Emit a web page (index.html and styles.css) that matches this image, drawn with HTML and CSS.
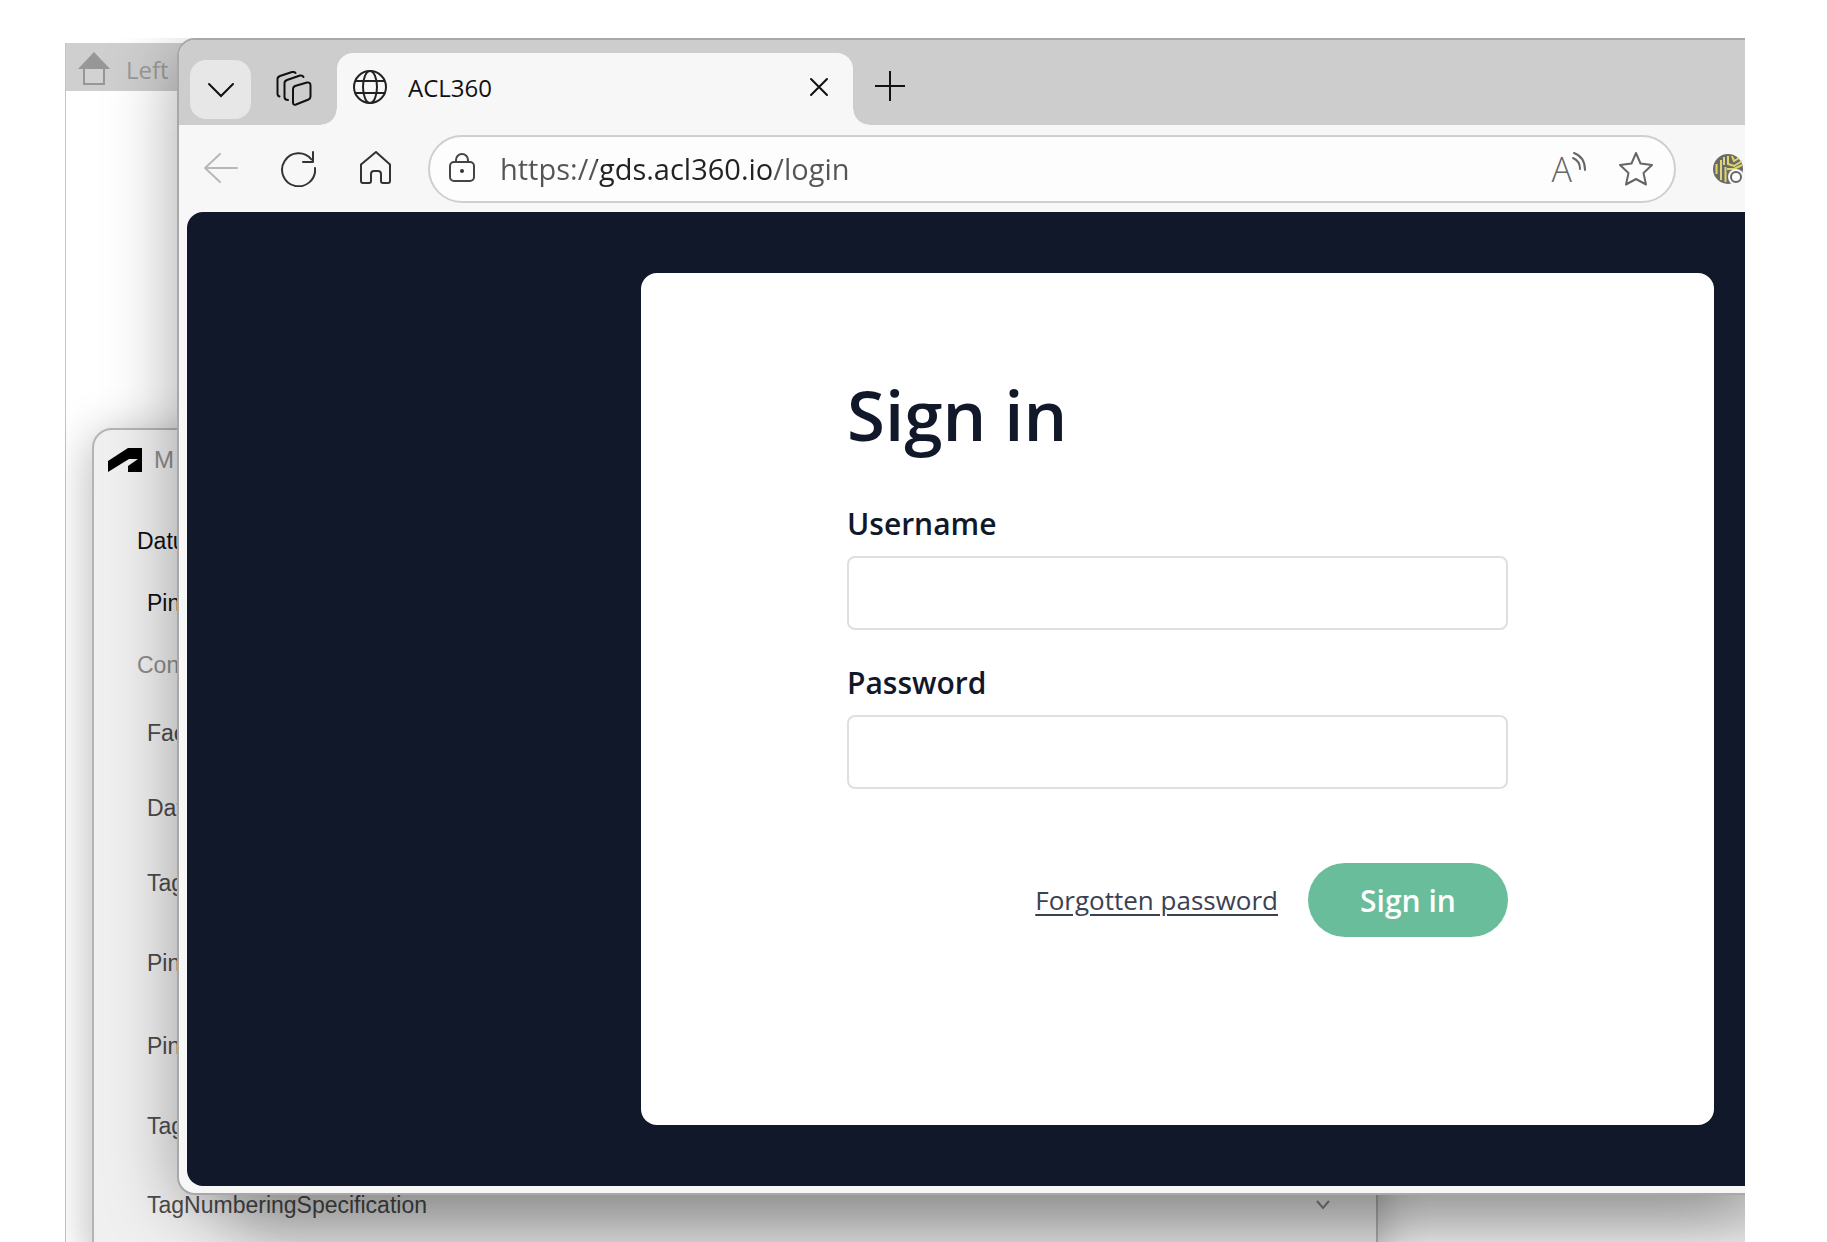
FILE: index.html
```html
<!DOCTYPE html>
<html lang="en">
  <head>
    <meta charset="UTF-8" />
    <meta name="viewport" content="width=device-width, initial-scale=1.0" />
    <title>ACL360</title>
    <link rel="stylesheet" href="styles.css">
  </head>
  <body>
    <div class="desktop">
      <!-- drawing window -->
      <div class="viewer">
        <div class="viewer-head">
          <svg width="32" height="36" viewBox="0 0 32 36">
            <path d="M0 18 16 1l16 17z" fill="#979797" />
            <path d="M6 18v15h20V18" fill="#d2d2d2" stroke="#979797" stroke-width="2" />
          </svg>
          <span>Left</span>
        </div>
      </div>

      <!-- properties window -->
      <div class="palette">
        <div class="palette-head">
          <svg width="34" height="24" viewBox="0 0 34 24">
            <path d="M0 13 20 0h14v24H20v-6l10-7h-9L0 24z" fill="#000" />
          </svg>
          <span>M</span>
        </div>
        <div class="props">
          <span class="group">Datu</span>
          <span class="strong">Pin</span>
          <span class="group muted">Con</span>
          <span>Fac</span>
          <span>Dat</span>
          <span>Tag</span>
          <span>Pin</span>
          <span>Pin</span>
          <span>Tag</span>
          <div class="prop-field">
            <label for="spec">TagNumberingSpecification</label>
            <select id="spec"></select>
            <svg width="16" height="10" viewBox="0 0 16 10" fill="none" stroke="#8a8a8a" stroke-width="2">
              <path d="m2 1 6 7 6-7" />
            </svg>
          </div>
        </div>
      </div>

      <!-- browser -->
      <div class="browser">
        <div class="tabs">
          <button class="tab-menu" aria-label="Tab actions">
            <svg width="28" height="18" viewBox="0 0 28 18" fill="none" stroke="#111" stroke-width="2" stroke-linecap="round">
              <path d="m2 3 12 12L26 3" />
            </svg>
          </button>
          <button class="icon-button workspaces" aria-label="Workspaces">
            <svg width="36" height="36" viewBox="0 0 36 36" fill="none" stroke="#111" stroke-width="2" stroke-linecap="round" stroke-linejoin="round">
              <path d="M19 15 31 11.500q3.500-.500 3.500 3v11q0 2-2 3L20 33.500q-3 1-3-2V18q0-2 2-3z" />
              <path d="M12 29q-3.500 0-3.500-3V12q0-2 2.500-3L24 4.500q2.500-.500 3.500 1.500" />
              <path d="M3.500 25.500Q1.500 25 1.500 22.500V8q0-2 2.500-3L16 1q2.500-.500 3.500 1" />
            </svg>
          </button>
          <div class="tab">
            <svg width="36" height="36" viewBox="0 0 36 36" fill="none" stroke="#222" stroke-width="2">
              <circle cx="18" cy="18" r="16" />
              <ellipse cx="18" cy="18" rx="7" ry="16" />
              <path d="M3.500 12h29M3.500 24h29" />
            </svg>
            <span class="tab-title">ACL360</span>
            <button class="icon-button" aria-label="Close tab">
              <svg width="20" height="20" viewBox="0 0 20 20" stroke="#111" stroke-width="2" stroke-linecap="round">
                <path d="m2 2 16 16M18 2 2 18" />
              </svg>
            </button>
          </div>
          <button class="icon-button new-tab" aria-label="New tab">
            <svg width="32" height="32" viewBox="0 0 32 32" stroke="#111" stroke-width="2">
              <path d="M16 1v30M1 16h30" />
            </svg>
          </button>
        </div>

        <div class="toolbar">
          <button class="icon-button" aria-label="Back">
            <svg width="36" height="36" viewBox="0 0 36 36" fill="none" stroke="#b8b8b8" stroke-width="2" stroke-linecap="round" stroke-linejoin="round">
              <path d="M34 17H2M17 3 2 17l15 14" />
            </svg>
          </button>
          <button class="icon-button" aria-label="Refresh">
            <svg width="36" height="36" viewBox="0 0 36 36" fill="none" stroke="#333" stroke-width="2" stroke-linecap="round" stroke-linejoin="round">
              <path d="M35 17A16.500 16.500 0 1 1 31.500 8.500M33 1v10H23" />
            </svg>
          </button>
          <button class="icon-button" aria-label="Home">
            <svg width="36" height="36" viewBox="0 0 36 36" fill="none" stroke="#333" stroke-width="2" stroke-linejoin="round">
              <path d="M4 13.500 19 1l14 12.500V30q0 2-2 2h-5q-2 0-2-2v-7q0-3-3-3h-4q-3 0-3 3v7q0 2-2 2H6q-2 0-2-2z" />
            </svg>
          </button>
          <div class="address">
            <svg width="28" height="32" viewBox="0 0 28 32" fill="none" stroke="#444" stroke-width="2">
              <rect x="2" y="9" width="24" height="19" rx="4" />
              <path d="M8 9V7a6 6 0 0 1 12 0v2" />
              <circle cx="14" cy="18" r="2" fill="#333" stroke="none" />
            </svg>
            <input class="url" type="text" aria-label="Address" value="https://gds.acl360.io/login">
            <button class="icon-button read" aria-label="Read aloud">
              <span>A</span>
              <svg width="14" height="20" viewBox="0 0 14 20" fill="none" stroke="#666" stroke-width="2" stroke-linecap="round">
                <path d="M1 7q7 3 7 11M2 2q11 4 11 17" />
              </svg>
            </button>
            <button class="icon-button" aria-label="Favourite">
              <svg width="36" height="36" viewBox="0 0 36 36" fill="none" stroke="#666" stroke-width="2" stroke-linejoin="round">
                <path d="m18 2 4.500 10.500L34 14l-8.500 8L28 33.500 18 28 8 33.500 10.500 22 2 14l11.500-1.500z" />
              </svg>
            </button>
          </div>
          <button class="icon-button" aria-label="Extension">
            <svg width="32" height="32" viewBox="0 0 32 32" fill="none">
              <circle cx="15" cy="16" r="15" fill="#6a6a68" />
              <path d="M3.500 11v10M8 7v20M12.500 14v15M18 29V19h6" stroke="#e0d56c" stroke-width="2" />
              <path d="M11 4v8M15 3v8l6 2 8-5M19 3l2 5 5-3M14 16h7l8-4" stroke="#e0d56c" stroke-width="2" />
              <circle cx="23" cy="24" r="8" fill="#f7f7f7" />
              <circle cx="23" cy="24" r="5" fill="#fff" stroke="#666" stroke-width="2" />
            </svg>
          </button>
        </div>

        <div class="page">
          <form class="card">
            <h1 class="title">Sign in</h1>
            <label for="username">Username</label>
            <input class="field" id="username" type="text">
            <label for="password">Password</label>
            <input class="field" id="password" type="password">
            <div class="actions">
              <a class="forgot" href="#">Forgotten password</a>
              <button class="submit" type="button">Sign in</button>
            </div>
          </form>
        </div>
      </div>
    </div>
  </body>
</html>
```
FILE: styles.css
```css
* {
  box-sizing: border-box;
}
body {
  margin: 0;
  background: #fff;
  font-family: "Open Sans", sans-serif;
}
svg {
  display: block;
  flex-shrink: 0;
}
.desktop {
  position: relative;
  min-height: 100vh;
  margin: 0 82px 0 65px;
  padding: 38px 0 48px 112px;
  overflow: hidden;
}

/* windows behind the browser */
.viewer {
  position: absolute;
  top: 43px;
  right: 0;
  bottom: 0;
  left: 0;
  background: #fff;
  border-left: 1px solid #c4c4c4;
}
.viewer-head {
  display: flex;
  align-items: center;
  gap: 16px;
  height: 48px;
  padding: 4px 12px 0;
  background: #cfcfcf;
  color: #9a9a9a;
  font-size: 24px;
}
.palette {
  position: absolute;
  top: 428px;
  bottom: -20px;
  left: 27px;
  width: 1286px;
  background: #f0f0f0;
  border: 2px solid #b4b4b4;
  border-radius: 20px;
  box-shadow: 0 8px 48px rgba(0, 0, 0, .3);
  font-family: "Liberation Sans", sans-serif;
}
.palette-head {
  display: flex;
  align-items: center;
  gap: 12px;
  height: 60px;
  padding: 0 14px;
  color: #8c8c8c;
  font-size: 24px;
}
.props {
  display: grid;
  grid-template-rows: 62px 62px 62px 75px 75px 75px 84px 82px 78px 80px;
  align-items: center;
  margin-top: 20px;
  padding-left: 53px;
  color: #4c4c4c;
  font-size: 23px;
}
.group {
  margin-left: -10px;
  color: #111;
}
.strong {
  color: #111;
}
.muted {
  color: #8c8c8c;
}
.prop-field {
  display: flex;
  align-items: center;
  padding-right: 45px;
}
.prop-field select {
  flex: 1;
  height: 40px;
  appearance: none;
  border: none;
  background: none;
}

/* browser */
.browser {
  position: relative;
  background: #f7f7f7;
  border: 2px solid #a8a8a8;
  border-right: none;
  border-radius: 18px 0 0 18px;
  box-shadow: 0 12px 70px rgba(0, 0, 0, .35), 60px 50px 60px rgba(0, 0, 0, .2);
  /* the shadow falls to the left and below only */
  clip-path: inset(0 0 -120px -120px);
}
button {
  font-family: inherit;
  cursor: pointer;
}
.icon-button {
  padding: 0;
  border: none;
  background: none;
}
.tabs {
  display: flex;
  align-items: flex-end;
  height: 85px;
  padding-left: 11px;
  background: #cdcdcd;
  border-radius: 16px 0 0 0;
}
.tab-menu {
  display: flex;
  align-items: center;
  justify-content: center;
  width: 61px;
  height: 59px;
  margin-bottom: 6px;
  padding: 0;
  border: none;
  border-radius: 16px;
  background: #e7e7e7;
}
.workspaces {
  margin: 0 25px 18px;
}
.tab {
  position: relative;
  display: flex;
  align-items: center;
  width: 516px;
  height: 72px;
  padding: 0 24px 4px 15px;
  background: #f7f7f7;
  border-radius: 16px 16px 0 0;
}
/* curved feet of the active tab */
.tab::before,
.tab::after {
  content: "";
  position: absolute;
  bottom: 0;
  width: 16px;
  height: 16px;
}
.tab::before {
  right: 100%;
  background: radial-gradient(circle at 0 0, #cdcdcd 15px, #f7f7f7 16px);
}
.tab::after {
  left: 100%;
  background: radial-gradient(circle at 100% 0, #cdcdcd 15px, #f7f7f7 16px);
}
.tab-title {
  flex: 1;
  margin-left: 20px;
  color: #111;
  font-size: 24px;
}
.new-tab {
  margin: 0 0 23px 21px;
}
.toolbar {
  display: flex;
  align-items: center;
  height: 87px;
  padding: 0 0 0 24px;
  gap: 41px;
}
.address {
  display: flex;
  flex: 1;
  align-items: center;
  gap: 24px;
  height: 68px;
  margin: 0 -4px 0 -6px;
  padding: 0 20px 0 18px;
  background: #fdfdfd;
  border: 2px solid #cfcfcf;
  border-radius: 34px;
}
.address .icon-button + .icon-button {
  margin-left: 8px;
}
/* host name is darker than the rest of the address */
.url {
  flex: 1;
  min-width: 0;
  height: 48px;
  padding: 0;
  border: none;
  outline: none;
  color: transparent;
  background: linear-gradient(to right, #555 97px, #222 97px, #222 272px, #555 272px);
  background-clip: text;
  -webkit-background-clip: text;
  font-family: "Open Sans", sans-serif;
  font-size: 29px;
}
.read {
  display: flex;
  align-items: flex-start;
  color: #666;
  font-size: 34px;
  font-weight: 300;
  line-height: 36px;
}

/* login page */
.page {
  margin: 0 0 7px 8px;
  padding: 61px 31px 61px 454px;
  background: #101829;
  border-radius: 16px 0 0 16px;
}
.card {
  display: flex;
  flex-direction: column;
  padding: 95px 206px 188px;
  background: #fff;
  border-radius: 16px;
  color: #101829;
}
.title {
  margin: 0 0 44px;
  font-size: 69px;
  font-weight: 600;
  line-height: 92px;
}
.card label {
  margin-bottom: 12px;
  font-size: 30px;
  font-weight: 600;
  line-height: 40px;
}
.field {
  height: 74px;
  margin-bottom: 33px;
  padding: 0 16px;
  border: 2px solid #dedfe1;
  border-radius: 8px;
  background: #fff;
  font-family: inherit;
  font-size: 28px;
}
.actions {
  display: flex;
  align-items: center;
  justify-content: flex-end;
  gap: 30px;
  margin-top: 41px;
}
.forgot {
  color: #3c4152;
  font-size: 26px;
  text-underline-offset: 4px;
}
.submit {
  width: 200px;
  height: 74px;
  border: none;
  border-radius: 37px;
  background: #6abd9b;
  color: #fff;
  font-size: 30px;
  font-weight: 600;
}
```
